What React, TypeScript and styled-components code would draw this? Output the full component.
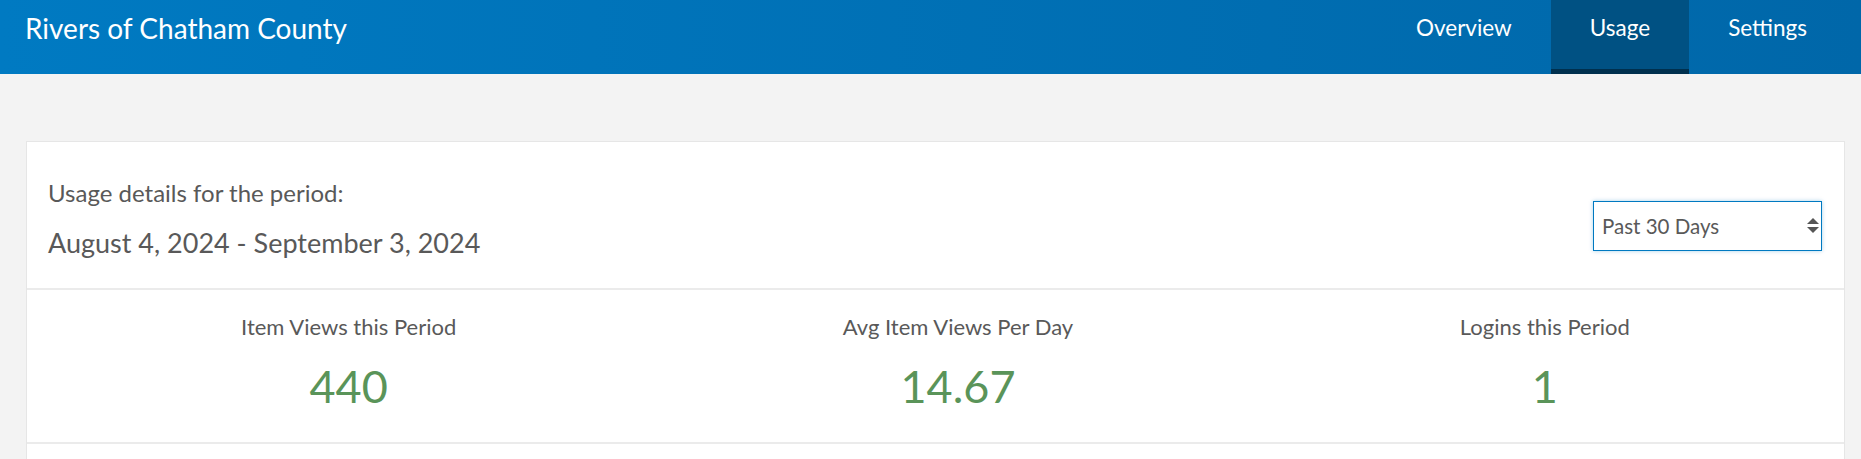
import React from 'react'
import styled, { createGlobalStyle } from 'styled-components'

const GlobalStyle = createGlobalStyle`
  html, body {
    margin: 0;
    padding: 0;
    background: #f3f3f3;
    font-family: Lato, "Open Sans", sans-serif;
    color: #595959;
    overflow: hidden;
  }
`

const Page = styled.div`
  width: 1861px;
  height: 459px;
  background: #f3f3f3;
`

const Header = styled.header`
  height: 74px;
  display: flex;
  justify-content: space-between;
  align-items: stretch;
  padding: 0 15px 0 25px;
  background: linear-gradient(to right, #007ac2, #0067a9);
  color: #fff;
`

const Title = styled.h1`
  margin: 0;
  padding-top: 11px;
  font-size: 28px;
  line-height: 34px;
  font-weight: 400;
`

const Nav = styled.nav`
  display: flex;
`

const Tab = styled.a<{ $active?: boolean }>`
  display: block;
  padding: 14px 39px 0;
  font-size: 22.5px;
  line-height: 28px;
  color: #fff;
  text-decoration: none;
  background: ${p => (p.$active ? '#005183' : 'transparent')};
  box-shadow: ${p => (p.$active ? 'inset 0 -5px 0 #00304e' : 'none')};
`

const Body = styled.main`
  padding: 67px 16px 0 26px;
`

const Card = styled.section`
  background: #fff;
  border: 1px solid #e6e6e6;
  border-bottom: none;
`

const PeriodRow = styled.div`
  display: flex;
  justify-content: space-between;
  align-items: flex-start;
  height: 148px;
  box-sizing: border-box;
  padding: 36px 22px 0 21px;
  border-bottom: 2px solid #ebebeb;
`

const PeriodLabel = styled.div`
  font-size: 24px;
  line-height: 30px;
`

const PeriodRange = styled.div`
  margin-top: 18px;
  font-size: 27px;
  line-height: 34px;
`

const SelectWrap = styled.div`
  position: relative;
  margin-top: 23px;
`

const Select = styled.select`
  display: block;
  appearance: none;
  width: 229px;
  height: 50px;
  padding: 0 30px 0 8px;
  border: 1px solid #0079c1;
  border-radius: 0;
  background: #fff;
  box-shadow: 0 0 4px rgba(0, 121, 193, 0.35);
  font-family: inherit;
  font-size: 20.5px;
  color: #595959;
  outline: none;
`

const Arrows = styled.svg`
  position: absolute;
  right: 3px;
  top: 17px;
  pointer-events: none;
`

const Stats = styled.div`
  display: grid;
  grid-template-columns: 643fr 575fr 598fr;
  height: 154px;
  box-sizing: border-box;
  padding-top: 23px;
  border-bottom: 2px solid #ebebeb;
`

const Stat = styled.div`
  display: flex;
  flex-direction: column;
  align-items: center;
`

const StatLabel = styled.div`
  font-size: 22px;
  line-height: 28px;
`

const StatValue = styled.div`
  margin-top: 17px;
  font-size: 45px;
  line-height: 56px;
  color: #5a9459;
`

const Rest = styled.div`
  height: 20px;
`

const stats = [
  { label: 'Item Views this Period', value: '440' },
  { label: 'Avg Item Views Per Day', value: '14.67' },
  { label: 'Logins this Period', value: '1' },
]

const App = () => {
  return (
    <Page>
      <GlobalStyle />
      <Header>
        <Title>Rivers of Chatham County</Title>
        <Nav>
          <Tab>Overview</Tab>
          <Tab $active>Usage</Tab>
          <Tab>Settings</Tab>
        </Nav>
      </Header>
      <Body>
        <Card>
          <PeriodRow>
            <div>
              <PeriodLabel>Usage details for the period:</PeriodLabel>
              <PeriodRange>August 4, 2024 - September 3, 2024</PeriodRange>
            </div>
            <SelectWrap>
              <Select defaultValue="30">
                <option value="7">Past 7 Days</option>
                <option value="30">Past 30 Days</option>
                <option value="60">Past 60 Days</option>
              </Select>
              <Arrows width="12" height="15" viewBox="0 0 12 15">
                <path d="M6 0 L12 6 L0 6 Z" fill="#555" />
                <path d="M0 9 L12 9 L6 15 Z" fill="#555" />
              </Arrows>
            </SelectWrap>
          </PeriodRow>
          <Stats>
            {stats.map(s => (
              <Stat key={s.label}>
                <StatLabel>{s.label}</StatLabel>
                <StatValue>{s.value}</StatValue>
              </Stat>
            ))}
          </Stats>
          <Rest />
        </Card>
      </Body>
    </Page>
  )
}

export default App
